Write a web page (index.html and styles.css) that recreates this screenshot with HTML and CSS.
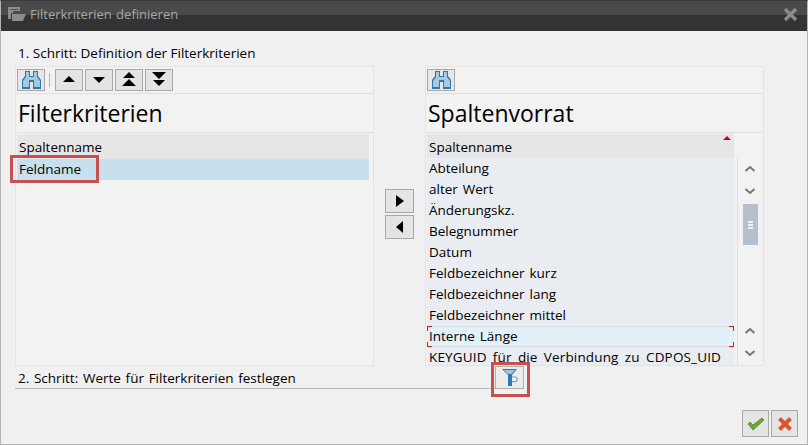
FILE: index.html
```html
<!DOCTYPE html>
<html lang="de">
<head>
<meta charset="utf-8">
<title>Filterkriterien definieren</title>
<link rel="stylesheet" href="styles.css">
</head>
<body>
<div class="window">
  <header class="titlebar">
    <svg class="title-icon" width="18" height="15" viewBox="0 0 18 15"><path d="M0 0h12v4H5v2H3v6H0z" fill="#8c8c8c"/><path d="M4 7h14l-3 7H4z" fill="#8c8c8c"/><path d="M2 2h8v1H2z" fill="#555"/></svg>
    <span class="title-text">Filterkriterien definieren</span>
    <svg class="title-close" width="15" height="15" viewBox="0 0 15 15"><path d="M2 2l11 11M13 2L2 13" stroke="#8a8a8a" stroke-width="3.4" fill="none"/></svg>
  </header>
  <main class="content">
    <div class="step step-one">1. Schritt: Definition der Filterkriterien</div>
    <div class="columns">
      <section class="panel panel-left">
        <div class="toolbar">
          <button class="btn btn-find"><svg width="21" height="20" viewBox="0 0 21 20"><use href="#binoculars"/></svg></button>
          <span class="sep"></span>
          <button class="btn btn-move"><svg width="16" height="16" viewBox="0 0 16 16"><path d="M8 4l6 6H2z" fill="#000"/></svg></button>
          <button class="btn btn-move"><svg width="16" height="16" viewBox="0 0 16 16"><path d="M2 5h12l-6 6z" fill="#000"/></svg></button>
          <button class="btn btn-move"><svg width="16" height="16" viewBox="0 0 16 16"><path d="M8 0l6 6H2zM8 7l7 7H1z" fill="#000"/></svg></button>
          <button class="btn btn-move"><svg width="16" height="18" viewBox="0 0 16 18"><path d="M1 1h14l-7 7zM2 9h12l-6 6z" fill="#000"/></svg></button>
        </div>
        <h2 class="panel-title">Filterkriterien</h2>
        <div class="table-head">Spaltenname</div>
        <div class="row row-selected">Feldname</div>
      </section>
      <div class="transfer">
        <button class="btn btn-transfer"><svg width="12" height="14" viewBox="0 0 12 14"><path d="M2 1l8 6-8 6z" fill="#000"/></svg></button>
        <button class="btn btn-transfer"><svg width="12" height="14" viewBox="0 0 12 14"><path d="M9 1v12L2 7z" fill="#000"/></svg></button>
      </div>
      <section class="panel panel-right">
        <div class="toolbar">
          <button class="btn btn-find"><svg width="21" height="20" viewBox="0 0 21 20"><use href="#binoculars"/></svg></button>
        </div>
        <h2 class="panel-title">Spaltenvorrat</h2>
        <div class="table-wrap">
          <div class="table">
            <div class="table-head table-head-sorted">Spaltenname<span class="sort-mark"></span></div>
            <div class="list">
              <div class="row">Abteilung</div>
              <div class="row">alter Wert</div>
              <div class="row">Änderungskz.</div>
              <div class="row">Belegnummer</div>
              <div class="row">Datum</div>
              <div class="row">Feldbezeichner kurz</div>
              <div class="row">Feldbezeichner lang</div>
              <div class="row">Feldbezeichner mittel</div>
              <div class="row row-focus">Interne Länge<i class="c tl"></i><i class="c tr"></i><i class="c bl"></i><i class="c br"></i></div>
              <div class="row row-long">KEYGUID für die Verbindung zu CDPOS_UID</div>
            </div>
          </div>
          <div class="scrollbar">
            <div class="scroll-btns">
              <svg width="12" height="8" viewBox="0 0 12 8"><path d="M1.500 6L6 2l4.500 4" stroke="#777" stroke-width="2" fill="none"/></svg>
              <svg width="12" height="8" viewBox="0 0 12 8"><path d="M1.500 2L6 6l4.500-4" stroke="#777" stroke-width="2" fill="none"/></svg>
            </div>
            <div class="thumb"><span></span><span></span><span></span></div>
            <div class="scroll-btns scroll-btns-end">
              <svg width="12" height="8" viewBox="0 0 12 8"><path d="M1.500 6L6 2l4.500 4" stroke="#777" stroke-width="2" fill="none"/></svg>
              <svg width="12" height="8" viewBox="0 0 12 8"><path d="M1.500 2L6 6l4.500-4" stroke="#777" stroke-width="2" fill="none"/></svg>
            </div>
          </div>
        </div>
      </section>
    </div>
    <div class="step step-two">2. Schritt: Werte für Filterkriterien festlegen</div>
    <footer class="actions">
      <button class="btn btn-action"><svg width="20" height="16" viewBox="0 0 20 16"><path d="M2 8l5 6L18 4l-2-2-9 7-3-3z" fill="#6aa92f" stroke="#4f8a1e" stroke-width=".8"/></svg></button>
      <button class="btn btn-action"><svg width="16" height="16" viewBox="0 0 16 16"><path d="M2.500 2.500l11 11M13.500 2.500l-11 11" stroke="#d9572b" stroke-width="4" fill="none"/></svg></button>
    </footer>
    <button class="btn btn-filter"><svg width="18" height="19" viewBox="0 0 18 19"><path d="M1 1h15l-5 6v11H7V7z" fill="#2d7cb0"/><path d="M3 2h11l-3.500 4h-4z" fill="#9cc4dd"/><path d="M11 9h3a2.300 2.300 0 0 1 0 4.600h-3" stroke="#6ea6c9" stroke-width="1.200" fill="#eef4f8"/></svg></button>
    <div class="mark mark-name"></div>
    <div class="mark mark-filter"></div>
  </main>
</div>
<svg class="defs" width="0" height="0"><defs><g id="binoculars"><path d="M4 1h5v5h3V1h5v5l3 4v9h-8v-7H9v7H1v-9l3-4z" fill="#2f78a8"/><path d="M5 2h3v5h5V2h3v5l3 4v6h-6v-7H8v7H2v-6l3-4z" fill="#a4cae2"/></g></defs></svg>
</body>
</html>
```
FILE: styles.css
```css
* { box-sizing: border-box; }
html, body { margin: 0; height: 100%; overflow: hidden; }
body { background: #f0f0f0; font-family: "Open Sans", "Noto Sans", sans-serif; color: #000; }
.window { width: 808px; height: 445px; display: flex; flex-direction: column; border: 1px solid #b4b4b4; border-top-color: #3a3a3a; }
.titlebar { height: 30px; flex: none; display: flex; align-items: center; gap: 4px; padding: 0 9px 4px 7px; color: #a6a6a6; font-size: 13px; word-spacing: 1px; background: linear-gradient(#4a4a4a 0 14px, #333 14px); }
.title-close { margin-left: auto; }
.content { position: relative; flex: 1; padding: 12px 14px 0 14px; display: flex; flex-direction: column; }
.step { font-size: 13.500px; line-height: 20px; padding-left: 3px; }
.step-one { height: 23px; }
.columns { display: flex; height: 300px; }
.panel { border: 1px solid #e4e4e4; background: #f2f2f2; }
.panel-left { width: 359px; }
.panel-right { width: 339px; display: flex; flex-direction: column; }
.transfer { width: 51px; display: flex; flex-direction: column; align-items: center; gap: 2px; padding-top: 123px; }
.toolbar { height: 27px; display: flex; align-items: center; gap: 2px; padding-left: 1px; border-bottom: 1px solid #e0e0e0; }
.btn { padding: 0; margin: 0; border: 1px solid #a8a8a8; background: #e4e4e4; display: flex; align-items: center; justify-content: center; }
.btn-find { width: 28px; height: 22px; background: #e6e6e6; }
.btn-move { width: 28px; height: 22px; }
.sep { width: 1px; height: 14px; background: #b8b8b8; margin: 0 3px 0 2px; }
.btn-transfer { width: 29px; height: 24px; }
.panel-title { margin: 0; height: 39px; font-weight: 400; font-size: 23px; line-height: 39px; padding-left: 2px; border-bottom: 1px solid #e0e0e0; white-space: nowrap; }
.table-head { height: 25px; margin: 1px 4px 0 1px; padding-left: 2px; font-size: 13.500px; line-height: 26px; background: #e6e6e6; }
.row { height: 21px; line-height: 21px; font-size: 13.500px; word-spacing: 1.500px; padding-left: 2px; white-space: nowrap; position: relative; }
.row-selected { background: #c8e0ed; margin: 0 4px 0 1px; padding-left: 2px; }
.row-long { word-spacing: 2.600px; letter-spacing: 0.150px; }
.table-wrap { display: flex; flex: 1; min-height: 0; }
.table { width: 307px; margin-left: 1px; display: flex; flex-direction: column; min-height: 0; }
.table-head-sorted { position: relative; margin: 1px 0 0 0; height: 24px; flex: none; }
.sort-mark { position: absolute; top: 2px; right: 3px; border: 4px solid transparent; border-top: 0; border-bottom: 4px solid #c4002b; }
.list { flex: 1; overflow: hidden; background: #e9edf1; }
.row-focus { background: #e2f0f8; border-top: 1px solid #d8dde2; border-bottom: 1px solid #d8dde2; line-height: 19px; }
.c { position: absolute; width: 5px; height: 5px; border: 0 solid #d81c1c; }
.tl { left: 0; top: -1px; border-width: 1px 0 0 1px; }
.tr { right: 0; top: -1px; border-width: 1px 1px 0 0; }
.bl { left: 0; bottom: -1px; border-width: 0 0 1px 1px; }
.br { right: 0; bottom: -1px; border-width: 0 1px 1px 0; }
.scrollbar { flex: 1; margin: 25px 0 0 3px; border-left: 1px solid #e0e0e0; display: flex; flex-direction: column; align-items: center; padding: 7px 1px 0 0; position: relative; }
.scroll-btns { display: flex; flex-direction: column; gap: 14px; }
.scroll-btns-end { margin-top: auto; padding-bottom: 8px; }
.thumb { width: 15px; height: 41px; margin-top: 9px; background: #b6c0cc; display: flex; flex-direction: column; align-items: center; justify-content: center; gap: 1px; }
.thumb span { width: 5px; height: 2px; background: #eef1f4; }
.step-two { height: 23px; line-height: 24px; word-spacing: 1.200px; border-bottom: 1px solid #b8b8b8; margin-right: 298px; }
.actions { display: flex; justify-content: flex-end; gap: 2px; margin-top: 21px; margin-right: -5px; }
.btn-action { width: 27px; height: 27px; }
.btn-filter { position: absolute; left: 494px; top: 335px; width: 29px; height: 23px; background: #ececec; border-color: #b0b0b0; }
.mark { position: absolute; border: 3px solid #c75050; pointer-events: none; }
.mark-name { left: 9px; top: 124px; width: 89px; height: 28px; }
.mark-filter { left: 490px; top: 331px; width: 39px; height: 35px; }
.defs { position: absolute; }
```
